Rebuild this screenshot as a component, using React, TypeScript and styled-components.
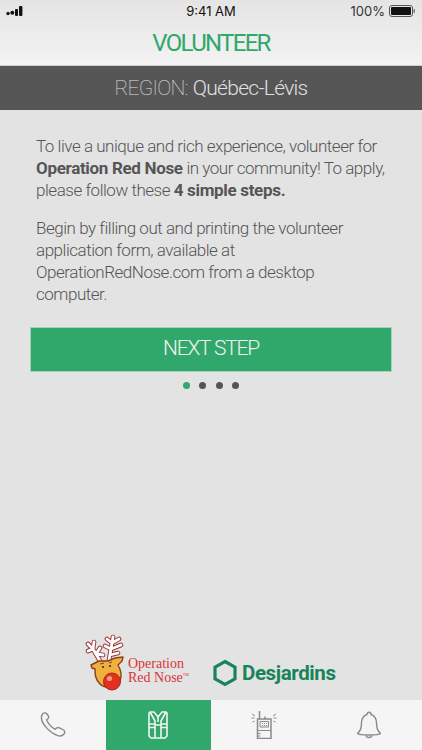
import React from "react";
import styled, { createGlobalStyle } from "styled-components";

const Global = createGlobalStyle`
  html, body { margin: 0; padding: 0; background: #e3e3e3; }
  * { box-sizing: border-box; }
`;
const Screen = styled.div`
  width: 422px; height: 750px; display: flex; flex-direction: column;
  background: #e3e3e3; font-family: Roboto, "Liberation Sans", sans-serif; overflow: hidden;
`;
const TopBar = styled.header`
  height: 65px; flex: none; display: flex; flex-direction: column;
  background: linear-gradient(#e4e4e4, #f3f3f3);
`;
const StatusBar = styled.div`
  height: 22px; padding: 0 6px; display: grid; grid-template-columns: 1fr auto 1fr; align-items: center;
  font-family: Inter, "Liberation Sans", sans-serif; font-size: 13px; color: #111;
`;
const StatusRight = styled.div`
  display: flex; justify-content: flex-end; align-items: center; gap: 4px; color: #333;
`;
const Title = styled.h1`
  margin: 0; height: 42px; display: flex; align-items: center; justify-content: center;
  font-size: 24px; font-weight: 400; color: #30a76b; letter-spacing: -1.7px;
`;
const RegionBar = styled.div`
  height: 45px; flex: none; background: #565656; border-top: 1px solid #d0d0d0; color: #e0e0e0;
  display: flex; align-items: center; justify-content: center; font-size: 21px; font-weight: 300; letter-spacing: -0.7px;
`;
const Light = styled.span`font-weight: 100; margin-right: 5px;`;
const Main = styled.main`
  flex: 1; padding: 25px 30px 0; display: flex; flex-direction: column;
`;
const Para = styled.p`
  margin: 0 6px 16px; font-size: 17px; line-height: 22px; font-weight: 300; color: #555; letter-spacing: -0.47px;
  b { font-weight: 700; letter-spacing: -0.32px; }
`;
const NextButton = styled.button`
  height: 45px; margin-top: 6px; padding: 0 0 3px; border: 0; background: #30a76b; color: #f2f2f2;
  font: 300 21px Roboto, sans-serif; letter-spacing: -1.2px;
  box-shadow: 0 0 0 1px #a5d2b9 inset;
`;
const Dots = styled.div`
  margin-top: 10px; height: 7px; display: flex; justify-content: center; gap: 9.3px;
`;
const Dot = styled.span<{ $on?: boolean }>`
  width: 7px; height: 7px; border-radius: 50%; background: ${(p) => (p.$on ? "#30a76b" : "#555")};
`;
const Logos = styled.div`
  margin-top: auto; height: 66px; display: flex; align-items: flex-start; justify-content: center;
`;
const OrnLogo = styled.div`display: flex; align-items: flex-start; width: 128px;`;
const OrnText = styled.div`
  font-family: "Liberation Serif", serif; font-size: 14px; line-height: 14px; color: #d8343a;
  margin: 23px 0 0 0; white-space: nowrap;
  sup { font-size: 4px; vertical-align: 6px; line-height: 0; }
`;
const DesLogo = styled.div`
  display: flex; align-items: center; gap: 5px; width: 124px; margin-top: 25px; color: #17845a;
  font: 700 20.5px Roboto, sans-serif; letter-spacing: -0.4px;
`;
const TabBar = styled.nav`
  height: 50px; flex: none; background: #f5f5f5; display: grid; grid-template-columns: repeat(4, 105.5px);
`;
const Tab = styled.div<{ $on?: boolean }>`
  display: flex; align-items: center; justify-content: center; background: ${(p) => (p.$on ? "#30a76b" : "transparent")};
  color: ${(p) => (p.$on ? "#f4f4f4" : "#8a8a8a")};
`;

const Signal = () => (
  <svg width="17" height="10" viewBox="0 0 17 10" fill="#111">
    <circle cx="2" cy="7.5" r="1.7" /><circle cx="6.3" cy="6.8" r="2" />
    <rect x="9" y="3" width="3" height="7" rx="1" /><rect x="13" y="0" width="3.4" height="10" rx="1" />
  </svg>
);
const Battery = () => (
  <svg width="27" height="12" viewBox="0 0 27 12">
    <rect x="0.5" y="0.5" width="23" height="11" rx="2.5" fill="none" stroke="#555" />
    <rect x="2" y="2" width="20" height="8" rx="1" fill="#111" />
    <rect x="24.5" y="4" width="1.5" height="4" rx=".7" fill="#777" />
  </svg>
);
const ANTLERS =
  "M15 27L8 15M8 15L3 17M8 15L3 10M8 15L9 8M11 20L15 14M12 20L18 21M24 26L27 9M27 9L22 5M27 9L28 3M27 9L34 5M26 15L20 12M26 15L36 11M25 21L33 19";
const Reindeer = () => (
  <svg width="43" height="57" viewBox="0 0 43 57" style={{ flex: "none" }}>
    <path d={ANTLERS} fill="none" stroke="#9c2f2c" strokeWidth="4.600" strokeLinecap="round" />
    <path d={ANTLERS} fill="none" stroke="#fff" strokeWidth="2.800" strokeLinecap="round" />
    <path d="M6 31l8-4 9 0 7-3 8-1-1 4-4 4c3 5 4 11 2 16-3 7-15 8-20 3-5-5-5-10-5-15l-3-1z" fill="#f0b03e" stroke="#8a3f1a" strokeWidth="1.400" strokeLinejoin="round" />
    <circle cx="18" cy="33" r="1.100" fill="#333" /><circle cx="25" cy="32" r="1.100" fill="#333" />
    <path d="M15 30l4-1M24 29l3-1" stroke="#5a2e14" strokeWidth=".8" />
    <circle cx="27" cy="47.500" r="8.500" fill="#e2321f" stroke="#a8241a" />
    <circle cx="24.500" cy="44.500" r="2.600" fill="#f79680" />
  </svg>
);
const Hexagon = () => (
  <svg width="24" height="28" viewBox="0 0 24 28" style={{ flex: "none" }}>
    <path d="M12 2.500L22 8.200v11.600L12 25.500 2 19.800V8.200z" fill="none" stroke="#17845a" strokeWidth="3.200" />
  </svg>
);
const Phone = () => (
  <svg width="28" height="28" viewBox="0 0 28 28" fill="none" stroke="currentColor" strokeWidth="1.400" strokeLinejoin="round">
    <path transform="translate(1 0)" d="M2.500 3c1-1.300 3-1.500 4-.5l2 2.500c.5 1 .2 2-.6 2.700l-1.400 1c1.600 3.500 5 7.600 8.600 9.600l1.500-1.300c1-.7 2-.7 2.800-.2l4.200 2.200c1.400 1 1.400 2.800.4 4-1.500 2-3.800 2.500-6.500 1.600C10 22 2.500 13.500 1.500 8c-.3-1.700 0-3.800 1-5z" />
  </svg>
);
const Vest = () => (
  <svg width="20" height="28" viewBox="0 0 20 28" fill="none" stroke="currentColor" strokeWidth="1.600" strokeLinejoin="round">
    <path d="M2 1h4l4 5 4-5h4l1 1v23l-2 2H3l-2-2V2z" />
    <path d="M2 1l5 9v17M18 1l-5 9v17M1 13h6M13 13h6M1 16.500h6M13 16.500h6M10 6v5M7 14h6" />
  </svg>
);
const Radio = () => (
  <svg width="26" height="28" viewBox="0 0 26 28" fill="none" stroke="currentColor" strokeWidth="1.500">
    <path d="M6.500 8h13.500v19.500H6.500zM8.500 8V0M14 8V5.500" />
    <path d="M6.500 19.500h13.500M6.500 22.500h3M6.500 25h3" strokeWidth="1.200" />
    <path d="M9 10.500h8.500v5.500H9z" strokeWidth="1" />
    <path d="M11 12.500h5M11 14.500h5" strokeWidth="1.100" strokeDasharray="1 1" />
    <path d="M1 3l3 2M0.500 7h3M1.500 11l2-1M25 3l-3 2M25.500 7h-3M24.500 11l-2-1" strokeWidth="1" />
  </svg>
);
const Bell = () => (
  <svg width="26" height="28" viewBox="0 0 26 28" fill="none" stroke="currentColor" strokeWidth="1.400" strokeLinejoin="round">
    <path d="M1.500 22.500c3-3 4-5 4-11 0-4.500 3-7.500 5.500-8 0-3 4-3 4 0 2.500.5 5.500 3.500 5.500 8 0 6 1 8 4 11-1 1-7 1.500-11.500 1.500S2.500 23.500 1.500 22.500z" />
    <path d="M10 24.200c.3 3 5.700 3 6 0" />
  </svg>
);

export default function App() {
  return (
    <Screen>
      <Global />
      <TopBar>
        <StatusBar>
          <Signal />
          <span>9:41 AM</span>
          <StatusRight>100% <Battery /></StatusRight>
        </StatusBar>
        <Title>VOLUNTEER</Title>
      </TopBar>
      <RegionBar><Light>REGION:</Light> Québec-Lévis</RegionBar>
      <Main>
        <Para>To live a unique and rich experience, volunteer for <b>Operation Red Nose</b> in your community! To apply, please follow these <b>4 simple steps.</b></Para>
        <Para>Begin by filling out and printing the volunteer application form, available at OperationRedNose.com from a desktop computer.</Para>
        <NextButton>NEXT STEP</NextButton>
        <Dots><Dot $on /><Dot /><Dot /><Dot /></Dots>
        <Logos>
          <OrnLogo><Reindeer /><OrnText>Operation<br />Red Nose<sup>TM</sup></OrnText></OrnLogo>
          <DesLogo><Hexagon />Desjardins</DesLogo>
        </Logos>
      </Main>
      <TabBar>
        <Tab><Phone /></Tab>
        <Tab $on><Vest /></Tab>
        <Tab><Radio /></Tab>
        <Tab><Bell /></Tab>
      </TabBar>
    </Screen>
  );
}
